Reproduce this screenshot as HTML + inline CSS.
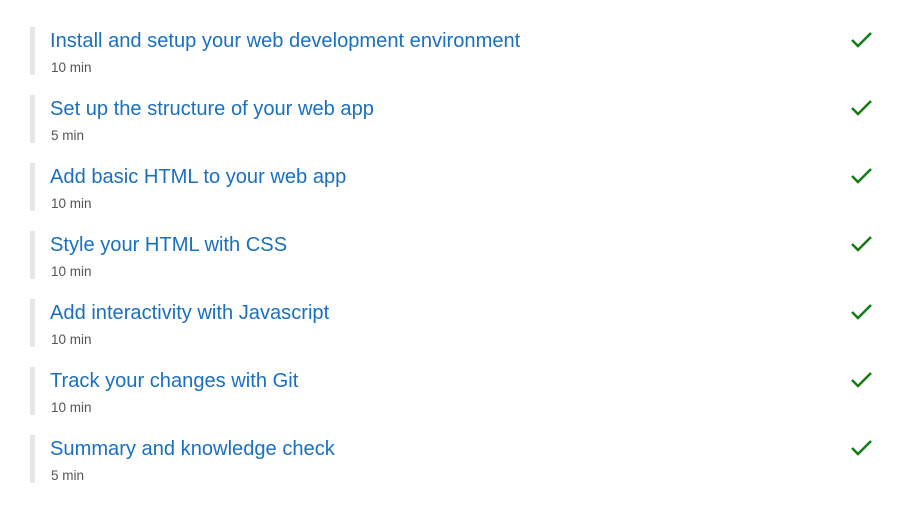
<!DOCTYPE html>
<html><head><style>
body{margin:0;width:919px;height:505px;background:#fff;font-family:"Liberation Sans",sans-serif;overflow:hidden}
.row{position:absolute;left:30px;width:850px;height:48px;border-left:5px solid #e6e6e6}
.t{position:absolute;left:15px;top:3px;font-size:20.1px;color:#1a6fc0;white-space:nowrap}
.s{position:absolute;left:16px;top:33px;font-size:13.5px;color:#555}
svg{position:absolute;left:815px;top:4px}
</style></head><body>
<div class="row" style="top:27px"><div class="t">Install and setup your web development environment</div><div class="s">10 min</div><svg width="24" height="18" viewBox="0 0 24 18"><path d="M2 9l6 6L21 2" fill="none" stroke="#107c10" stroke-width="2.4"/></svg></div>
<div class="row" style="top:95px"><div class="t">Set up the structure of your web app</div><div class="s">5 min</div><svg width="24" height="18" viewBox="0 0 24 18"><path d="M2 9l6 6L21 2" fill="none" stroke="#107c10" stroke-width="2.4"/></svg></div>
<div class="row" style="top:163px"><div class="t">Add basic HTML to your web app</div><div class="s">10 min</div><svg width="24" height="18" viewBox="0 0 24 18"><path d="M2 9l6 6L21 2" fill="none" stroke="#107c10" stroke-width="2.4"/></svg></div>
<div class="row" style="top:231px"><div class="t">Style your HTML with CSS</div><div class="s">10 min</div><svg width="24" height="18" viewBox="0 0 24 18"><path d="M2 9l6 6L21 2" fill="none" stroke="#107c10" stroke-width="2.4"/></svg></div>
<div class="row" style="top:299px"><div class="t">Add interactivity with Javascript</div><div class="s">10 min</div><svg width="24" height="18" viewBox="0 0 24 18"><path d="M2 9l6 6L21 2" fill="none" stroke="#107c10" stroke-width="2.4"/></svg></div>
<div class="row" style="top:367px"><div class="t">Track your changes with Git</div><div class="s">10 min</div><svg width="24" height="18" viewBox="0 0 24 18"><path d="M2 9l6 6L21 2" fill="none" stroke="#107c10" stroke-width="2.4"/></svg></div>
<div class="row" style="top:435px"><div class="t">Summary and knowledge check</div><div class="s">5 min</div><svg width="24" height="18" viewBox="0 0 24 18"><path d="M2 9l6 6L21 2" fill="none" stroke="#107c10" stroke-width="2.4"/></svg></div>
</body></html>
